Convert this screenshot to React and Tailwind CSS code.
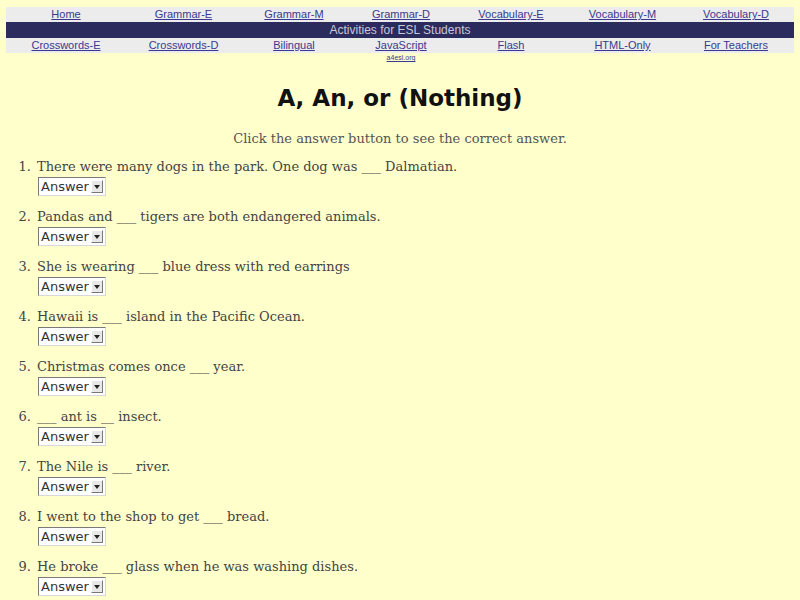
import React from 'react';

const topLinks = ['Home', 'Grammar-E', 'Grammar-M', 'Grammar-D', 'Vocabulary-E', 'Vocabulary-M', 'Vocabulary-D'];
const bottomLinks = ['Crosswords-E', 'Crosswords-D', 'Bilingual', 'JavaScript', 'Flash', 'HTML-Only', 'For Teachers'];

const questions = [
  'There were many dogs in the park. One dog was ___ Dalmatian.',
  'Pandas and ___ tigers are both endangered animals.',
  'She is wearing ___ blue dress with red earrings',
  'Hawaii is ___ island in the Pacific Ocean.',
  'Christmas comes once ___ year.',
  '___ ant is __ insect.',
  'The Nile is ___ river.',
  'I went to the shop to get ___ bread.',
  'He broke ___ glass when he was washing dishes.',
];

const cols = 'grid grid-cols-[120px_115px_106px_108px_112px_111px_116px]';

function AnswerBox() {
  // fake old-school select box
  return (
    <div className="flex items-center h-[19px] w-[68px] bg-white border border-t-[#7a7a7a] border-l-[#7a7a7a] border-r-[#d8d8d8] border-b-[#d8d8d8] pl-[2px] pr-[2px]">
      <span className="flex-1 text-[13px] leading-none text-[#333] font-['DejaVu_Sans',sans-serif]">Answer</span>
      <span className="flex items-center justify-center w-[12px] h-[13px] bg-[#e8e8e8] border border-t-white border-l-white border-r-[#777] border-b-[#777]">
        <svg width="6" height="4" viewBox="0 0 6 4"><path d="M0 0h6L3 4z" fill="#222" /></svg>
      </span>
    </div>
  );
}

export default function App() {
  return (
    <div className="min-h-[600px] bg-[#ffffcc] pt-[7px] font-['Liberation_Sans',sans-serif]">
      <div className="mx-[6px]">
        <div className={`${cols} bg-[#ececec] h-[15px] items-center`}>
          {topLinks.map((l) => (
            <a key={l} href="#" className="text-center text-[11px] leading-none text-[#39398f] underline">{l}</a>
          ))}
        </div>
        <div className="bg-[#2b2b5e] h-[16px] flex items-center justify-center text-[12px] leading-none text-[#c8c8d8]">
          Activities for ESL Students
        </div>
        <div className={`${cols} bg-[#ececec] h-[15px] items-center`}>
          {bottomLinks.map((l) => (
            <a key={l} href="#" className="text-center text-[11px] leading-none text-[#39398f] underline">{l}</a>
          ))}
        </div>
        <div className={cols}>
          <span />
          <span />
          <span />
          <a href="#" className="text-center text-[7px] leading-[10px] text-[#39398f] underline">a4esl.org</a>
        </div>
      </div>

      <h1 className="mt-[20px] text-center text-[23px] leading-[30px] font-bold text-[#111] font-['DejaVu_Sans',sans-serif]">
        A, An, or (Nothing)
      </h1>

      <p className="mt-[18px] text-center text-[13px] leading-[16px] text-[#555] font-['DejaVu_Serif',serif]">
        Click the answer button to see the correct answer.
      </p>

      <ol className="mt-[11px] font-['DejaVu_Serif',serif] text-[13px] text-[#444]">
        {questions.map((q, i) => (
          <li key={i} className="flex h-[50px]">
            <span className="w-[37px] text-right pr-[6px] leading-[18px]">{i + 1}.</span>
            <div className="flex flex-col gap-[1px]">
              <span className="leading-[18px]">{q}</span>
              <div className="ml-[1px]">
                <AnswerBox />
              </div>
            </div>
          </li>
        ))}
      </ol>
    </div>
  );
}
